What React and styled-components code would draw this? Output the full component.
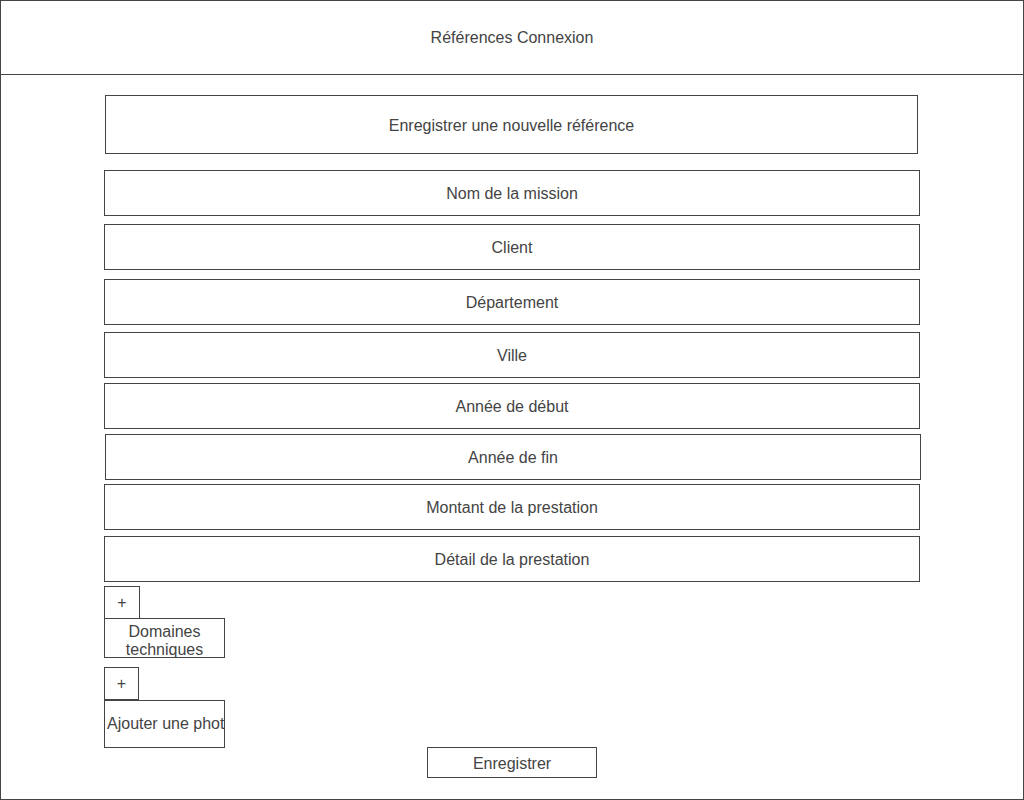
import React from "react";
import styled, { createGlobalStyle } from "styled-components";

const GlobalStyle = createGlobalStyle`
  html, body { margin: 0; padding: 0; background: #ffffff; }
  body { font-family: "Liberation Sans", Arial, sans-serif; color: #444444; }
  * { box-sizing: border-box; }
`;

const Frame = styled.div`
  width: 1024px;
  height: 800px;
  border: 1px solid #444444;
  background: #ffffff;
  display: flex;
  flex-direction: column;
  overflow: hidden;
`;

const Header = styled.header`
  height: 74px;
  flex-shrink: 0;
  border-bottom: 1px solid #444444;
  display: flex;
  align-items: center;
  justify-content: center;
  font-size: 16px;
  color: #444444;
`;

const Content = styled.main`
  display: flex;
  flex-direction: column;
  align-items: flex-start;
  padding-left: 103px;
`;

const Box = styled.div`
  margin-top: ${(p) => p.$mt}px;
  margin-left: ${(p) => p.$ml || 0}px;
  width: ${(p) => p.$w}px;
  height: ${(p) => p.$h}px;
  border: 1px solid #444444;
  background: #ffffff;
  display: flex;
  align-items: center;
  justify-content: center;
  font-size: 16px;
  color: #444444;
  white-space: nowrap;
  flex-shrink: 0;
`;

const Field = styled(Box)`
  padding-top: 2px;
`;

const PlusButton = styled(Box)`
  position: relative;
  z-index: 1;
`;

const Label = styled(Box)`
  align-items: flex-start;
  padding-top: 4px;
  white-space: normal;
  text-align: center;
  line-height: 18px;
`;

const PhotoLabel = styled(Box)`
  justify-content: flex-start;
  padding-left: 2px;
  overflow: hidden;
`;

const SaveRow = styled.div`
  display: flex;
  justify-content: center;
  margin-left: -103px;
  width: calc(100% + 103px);
`;

const SaveButton = styled(Box)`
  padding-top: 2px;
`;

const fields = [
  { label: "Nom de la mission", mt: 16, ml: 0 },
  { label: "Client", mt: 8, ml: 0 },
  { label: "Département", mt: 9, ml: 0 },
  { label: "Ville", mt: 7, ml: 0 },
  { label: "Année de début", mt: 5, ml: 0 },
  { label: "Année de fin", mt: 5, ml: 1 },
  { label: "Montant de la prestation", mt: 4, ml: 0 },
  { label: "Détail de la prestation", mt: 6, ml: 0 },
];

export default function App() {
  return (
    <>
      <GlobalStyle />
      <Frame>
        <Header>Références Connexion</Header>
        <Content>
          <Field $mt={20} $ml={1} $w={813} $h={59}>
            Enregistrer une nouvelle référence
          </Field>
          {fields.map((f) => (
            <Field key={f.label} $mt={f.mt} $ml={f.ml} $w={816} $h={46}>
              {f.label}
            </Field>
          ))}
          <PlusButton $mt={4} $w={36} $h={33}>+</PlusButton>
          <Label $mt={-1} $w={121} $h={40}>Domaines techniques</Label>
          <PlusButton $mt={9} $w={35} $h={33}>+</PlusButton>
          <PhotoLabel $mt={0} $w={121} $h={48}>Ajouter une photo</PhotoLabel>
          <SaveRow>
            <SaveButton $mt={-1} $w={170} $h={31}>Enregistrer</SaveButton>
          </SaveRow>
        </Content>
      </Frame>
    </>
  );
}
